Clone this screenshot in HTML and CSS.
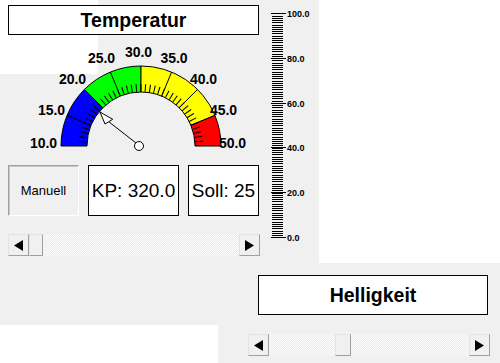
FILE: index.html
```html
<!DOCTYPE html>
<html>
<head>
<meta charset="utf-8">
<link rel="stylesheet" href="styles.css">
</head>
<body>
<div class="top">
  <div class="panel">
    <div class="left">
      <div class="title">Temperatur</div>
      <svg class="gauge" width="260" height="130" viewBox="0 35 260 130">
        <g stroke="#000" stroke-width="1">
          <path fill="#0000ff" d="M61,146 A80,80 0 0 1 84.43,89.43 L102.82,107.82 A54,54 0 0 0 87,146 Z"/>
          <path fill="#00ff00" d="M84.43,89.43 A80,80 0 0 1 141,66 L141,92 A54,54 0 0 0 102.82,107.82 Z"/>
          <path fill="#ffff00" d="M141,66 A80,80 0 0 1 214.91,115.39 L190.89,125.33 A54,54 0 0 0 141,92 Z"/>
          <path fill="#ff0000" d="M214.91,115.39 A80,80 0 0 1 221,146 L195,146 A54,54 0 0 0 190.89,125.33 Z"/>
          <line x1="67.09" y1="115.39" x2="91.11" y2="125.33"/>
          <line x1="110.39" y1="72.09" x2="120.33" y2="96.11"/>
          <line x1="171.61" y1="72.09" x2="161.67" y2="96.11"/>
          <line x1="197.57" y1="89.43" x2="179.18" y2="107.82"/>
        </g>
        <path d="M199,146 A58,58 0 0 0 83,146" fill="none" stroke="#000" stroke-width="8" stroke-dasharray="1 3.555" stroke-dashoffset="0.5"/>
        <g class="glabel">
          <text x="43.5" y="148">10.0</text>
          <text x="51.5" y="115">15.0</text>
          <text x="72.5" y="84">20.0</text>
          <text x="101.5" y="63">25.0</text>
          <text x="138.5" y="57">30.0</text>
          <text x="174" y="63">35.0</text>
          <text x="203.5" y="84">40.0</text>
          <text x="223.5" y="115">45.0</text>
          <text x="232.5" y="148">50.0</text>
        </g>
        <line x1="108.5" y1="121.5" x2="136" y2="143" stroke="#000" stroke-width="1"/>
        <polygon points="100,112 105,124 112.7,119.3" fill="#fff" stroke="#000" stroke-width="1"/>
        <circle cx="139" cy="146" r="4.5" fill="#fff" stroke="#000" stroke-width="1"/>
      </svg>
      <div class="buttons">
        <div class="btn">Manuell</div>
        <div class="box kp">KP: 320.0</div>
        <div class="box soll">Soll: 25</div>
      </div>
      <div class="scroll s1">
        <div class="sb-btn"><svg width="9" height="11" viewBox="0 0 9 11"><polygon points="0,5.5 9,0 9,11" fill="#000"/></svg></div>
        <div class="sb-thumb"></div>
        <div class="sb-track"></div>
        <div class="sb-btn"><svg width="9" height="11" viewBox="0 0 9 11"><polygon points="9,5.5 0,0 0,11" fill="#000"/></svg></div>
      </div>
    </div>
    <svg class="scale" width="59" height="263" viewBox="260 0 59 263">
      <line x1="277.5" y1="13.3" x2="277.5" y2="237.5" stroke="#000" stroke-width="11" stroke-dasharray="1 1.24" shape-rendering="crispEdges"/>
      <g stroke="#000" stroke-width="1" shape-rendering="crispEdges">
        <line x1="271" y1="13.5" x2="286" y2="13.5"/>
        <line x1="271" y1="58.5" x2="286" y2="58.5"/>
        <line x1="271" y1="103.5" x2="286" y2="103.5"/>
        <line x1="271" y1="147.5" x2="286" y2="147.5"/>
        <line x1="271" y1="192.5" x2="286" y2="192.5"/>
        <line x1="271" y1="237.5" x2="286" y2="237.5"/>
      </g>
      <g class="slabel">
        <text x="287" y="17">100.0</text>
        <text x="287" y="62">80.0</text>
        <text x="287" y="107">60.0</text>
        <text x="287" y="151">40.0</text>
        <text x="287" y="196">20.0</text>
        <text x="287" y="241">0.0</text>
      </g>
    </svg>
  </div>
  <div class="rest"></div>
</div>
<div class="bottom">
  <div class="title t2">Helligkeit</div>
  <div class="scroll s2">
    <div class="sb-btn"><svg width="9" height="11" viewBox="0 0 9 11"><polygon points="0,5.5 9,0 9,11" fill="#000"/></svg></div>
    <div class="sb-track" style="width:66px; flex:none"></div>
    <div class="sb-thumb"></div>
    <div class="sb-track"></div>
    <div class="sb-btn"><svg width="9" height="11" viewBox="0 0 9 11"><polygon points="9,5.5 0,0 0,11" fill="#000"/></svg></div>
  </div>
</div>
</body>
</html>
```
FILE: styles.css
```css
* { box-sizing: border-box; }
html, body { margin: 0; padding: 0; }
body {
  width: 500px;
  height: 363px;
  background: #fff;
  font-family: "Liberation Sans", Arial, sans-serif;
  overflow: hidden;
}
.top {
  display: flex;
  height: 263px;
}
.panel {
  width: 319px;
  height: 263px;
  display: grid;
  grid-template-columns: 260px 59px;
  background: linear-gradient(#fff, #fff) no-repeat 0 0 / 98px 74px, #f0f0f0;
}
.rest { flex: 1; background: #fff; }
.left {
  display: flex;
  flex-direction: column;
  padding-top: 5px;
}
.title {
  margin-left: 8px;
  width: 251px;
  height: 30px;
  border: 1px solid #000;
  background: #fff;
  font-weight: bold;
  font-size: 19.5px;
  line-height: 28px;
  text-align: center;
}
.gauge { display: block; }
.glabel text {
  font-family: "Liberation Sans", Arial, sans-serif;
  font-weight: bold;
  font-size: 14px;
  text-anchor: middle;
  fill: #000;
}
.slabel text {
  font-family: "Liberation Sans", Arial, sans-serif;
  font-weight: bold;
  font-size: 9px;
  fill: #000;
}
.scale { display: block; }
.buttons {
  display: flex;
  gap: 9px;
  margin-left: 8px;
  height: 51px;
}
.btn {
  width: 71px;
  border: 1px solid;
  border-color: #a0a0a0 #fff #fff #a0a0a0;
  box-shadow: inset 1px 1px 0 #c8c8c8;
  background: #f0f0f0;
  font-size: 13px;
  display: flex;
  align-items: center;
  justify-content: center;
}
.box {
  border: 1px solid #000;
  background: #fff;
  font-size: 19px;
  display: flex;
  align-items: center;
  justify-content: center;
  white-space: nowrap;
  overflow: hidden;
}
.kp { width: 91px; }
.soll { width: 71px; }
.scroll {
  display: flex;
  height: 22px;
}
.s1 {
  margin-top: 18px;
  margin-left: 8px;
  width: 252px;
}
.sb-btn, .sb-thumb {
  width: 21px;
  flex: none;
  background: #f0f0f0;
  border: 1px solid;
  border-color: #e3e3e3 #a0a0a0 #a0a0a0 #e3e3e3;
  display: flex;
  align-items: center;
  justify-content: center;
}
.sb-thumb { width: 14px; }
.sb-track {
  flex: 1;
  background: repeating-conic-gradient(#fbfbfb 0 25%, #ececec 0 50%) 0 0 / 2px 2px;
}
.bottom {
  height: 100px;
  background: linear-gradient(#fff, #fff) no-repeat 0 100% / 218px 38px, #f0f0f0;
  padding-top: 12px;
}
.t2 {
  margin-left: 258px;
  width: 230px;
  height: 40px;
  line-height: 38px;
}
.s2 {
  margin-top: 19px;
  margin-left: 248px;
  width: 242px;
}
.s2 .sb-thumb { width: 16px; }
```
